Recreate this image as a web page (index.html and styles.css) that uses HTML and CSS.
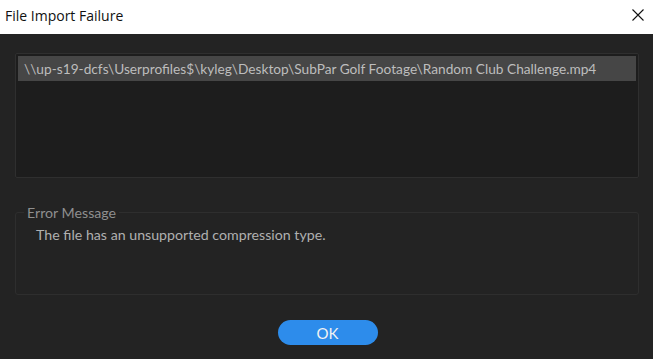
FILE: index.html
```html
<!DOCTYPE html>
<html>
  <head>
    <title>File Import Failure</title>
    <link rel="stylesheet" href="styles.css">
  </head>
  <body>
    <div class="titlebar">
      <span class="title">File Import Failure</span>
      <button class="close" aria-label="Close">
        <svg width="12" height="12" viewBox="0 0 12 12"><path d="M0.5 0.5 L11.5 11.5 M11.5 0.5 L0.5 11.5" stroke="#111" stroke-width="1.1" fill="none"/></svg>
      </button>
    </div>
    <div class="content">
      <ul class="files">
        <li class="selected">\\up-s19-dcfs\Userprofiles$\kyleg\Desktop\SubPar Golf Footage\Random Club Challenge.mp4</li>
      </ul>
      <fieldset class="error">
        <legend>Error Message</legend>
        <p>The file has an unsupported compression type.</p>
      </fieldset>
      <div class="actions">
        <button class="ok">OK</button>
      </div>
    </div>
  </body>
</html>
```

FILE: styles.css
```css
body {
  margin: 0;
  background: #232323;
  font-family: Lato, "Liberation Sans", sans-serif;
  height: 359px;
  overflow: hidden;
}

.titlebar {
  height: 34px;
  background: #fff;
  display: flex;
  align-items: center;
  justify-content: space-between;
  padding: 0 9px 0 5px;
}

.title {
  font-family: "Open Sans", sans-serif;
  font-size: 14px;
  color: #111;
  padding-bottom: 3px;
}

.close {
  border: none;
  background: none;
  padding: 0;
  width: 12px;
  height: 12px;
  display: flex;
  margin-bottom: 4px;
}

.content {
  padding: 19px 14px 0 15px;
}

.files {
  list-style: none;
  margin: 0;
  padding: 2px;
  height: 119px;
  background: #1d1d1d;
  border: 1px solid #2f2f2f;
  border-radius: 2px;
}

.files li {
  height: 25px;
  line-height: 25px;
  padding-left: 6px;
  font-size: 13.7px;
  color: #bdbdbd;
  white-space: nowrap;
}

.files li.selected {
  background: #464646;
}

.error {
  margin: 26px 0 0;
  padding: 0 0 0 20px;
  height: 89px;
  border: 1px solid #2e2e2e;
  border-radius: 3px;
}

.error legend {
  margin-left: -12px;
  padding: 0 3px;
  font-size: 14.2px;
  color: #8f8f8f;
}

.error p {
  margin: 5px 0 0;
  font-size: 14.2px;
  color: #b0b0b0;
}

.actions {
  display: flex;
  justify-content: center;
  margin-top: 25px;
}

.ok {
  width: 100px;
  height: 25px;
  border: none;
  border-radius: 13px;
  background: #2d8ceb;
  color: #f2f2f2;
  font-family: Lato, sans-serif;
  font-size: 15px;
  padding: 0;
  margin-left: 1px;
}
```
